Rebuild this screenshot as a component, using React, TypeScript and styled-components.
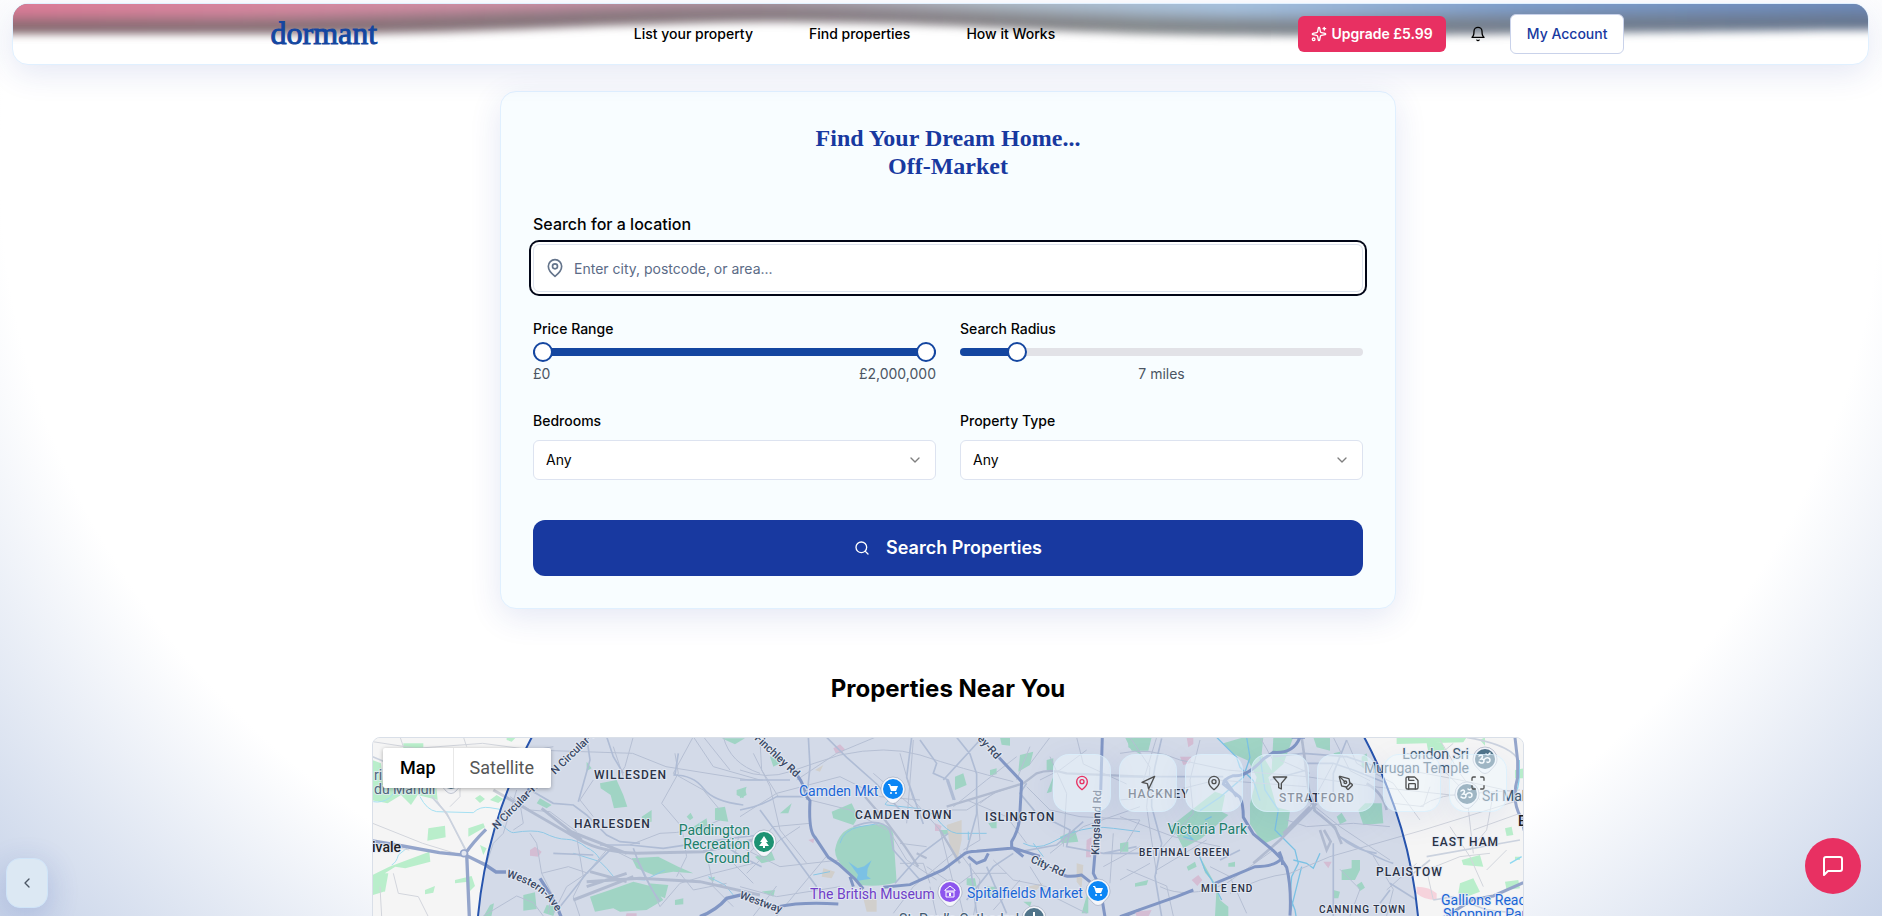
import React, { useState } from 'react';
import styled, { createGlobalStyle, css } from 'styled-components';
import { Sparkles, Navigation, PenTool, Save, Maximize, ChevronLeft, ChevronDown, Search } from 'lucide-react';

const BRAND = '#1446a0';
const INDIGO = '#1839a0';
const PINK = '#e83062';

const GlobalStyle = createGlobalStyle`
  *, *::before, *::after { box-sizing: border-box; }
  html { scrollbar-width: none; }
  body {
    margin: 0;
    font-family: Inter, "Liberation Sans", sans-serif;
    font-size: 14px;
    line-height: 20px;
    color: #020202;
    -webkit-font-smoothing: antialiased;
  }
  button, input, select { font: inherit; color: inherit; }
`;

const Page = styled.div`
  min-height: 100vh;
  overflow: hidden;
  padding: 3px 13px 64px 12px;
  background: radial-gradient(125vw 2060px at 50% 165px, #fff 40%, ${BRAND} 100%);
`;

const glass = css`
  border: 1px solid #e0f0ff;
  box-shadow: 0 8px 32px rgba(31, 60, 165, 0.12);
`;

/* Header */

const Header = styled.header`
  ${glass}
  position: relative;
  height: 62px;
  border-radius: 16px;
  background: #fff;
  display: flex;
  justify-content: center;
  padding-left: 14px;
`;

const WaveClip = styled.div`
  position: absolute;
  inset: 0;
  overflow: hidden;
  border-radius: 15px;
  svg { display: block; width: 100%; height: 100%; }
`;

const HeaderInner = styled.div`
  position: relative;
  flex: 1;
  max-width: 1354px;
  display: flex;
  align-items: center;
  justify-content: space-between;
`;

const Logo = styled.a`
  width: 120px;
  font: 400 32px/40px "Liberation Serif", serif;
  color: ${BRAND};
  -webkit-text-stroke: 1px ${BRAND};
  text-decoration: none;
  padding-bottom: 2px;
`;

const Nav = styled.nav`
  display: flex;
  gap: 56px;
`;

const NavLink = styled.a`
  font-weight: 500;
  color: #000;
  text-decoration: none;
`;

const Actions = styled.div`
  display: flex;
  align-items: center;
  gap: 12px;
`;

const UpgradeButton = styled.button`
  display: flex;
  align-items: center;
  gap: 4px;
  height: 36px;
  padding: 0 13px;
  border: 0;
  border-radius: 6px;
  background: ${PINK};
  color: #fff;
  font-weight: 600;
`;

const IconButton = styled.button`
  display: grid;
  place-items: center;
  width: 40px;
  height: 40px;
  border: 0;
  padding: 0;
  background: transparent;
`;

const AccountButton = styled.button`
  height: 40px;
  padding: 0 16px;
  border: 1px solid #c9d2ea;
  border-radius: 6px;
  background: #fff;
  color: ${INDIGO};
  font-weight: 500;
`;

/* Search card */

const Main = styled.main`
  padding: 26px 0 0 15px;
  display: flex;
  flex-direction: column;
  align-items: center;
`;

const Card = styled.form`
  ${glass}
  width: 100%;
  max-width: 896px;
  padding: 32px;
  border-radius: 16px;
  background: #f8fdff;
`;

const Title = styled.h1`
  margin: 0 0 32px;
  text-align: center;
  font: 700 24px/28px "Liberation Serif", serif;
  color: ${INDIGO};
`;

const Label = styled.label<{ $large?: boolean; $gap: number }>`
  display: block;
  margin-bottom: ${(p) => p.$gap}px;
  font-weight: 500;
  font-size: ${(p) => (p.$large ? 16 : 14)}px;
  line-height: ${(p) => (p.$large ? 24 : 20)}px;
`;

const LocationField = styled.div`
  display: flex;
  align-items: center;
  gap: 9px;
  height: 48px;
  padding: 0 12px 0 11px;
  border: 1px solid #dde3ee;
  border-radius: 6px;
  background: #fff;
  color: #64748b;
  box-shadow: 0 0 0 2px #fff, 0 0 0 4px #020617;
`;

const LocationInput = styled.input`
  flex: 1;
  min-width: 0;
  padding: 2px 0 0;
  border: 0;
  outline: 0;
  background: transparent;
  &::placeholder { color: #5b6b86; opacity: 1; }
`;

const Columns = styled.div`
  display: grid;
  grid-template-columns: 1fr 1fr;
  gap: 24px;
  margin-top: 27px;
`;

const Field = styled.div`
  min-width: 0;
`;

const Slider = styled.div`
  position: relative;
  height: 20px;
  display: flex;
  align-items: center;
`;

const Track = styled.div`
  flex: 1;
  height: 8px;
  border-radius: 4px;
  background: #e2e2e7;
  overflow: hidden;
`;

const Fill = styled.div`
  height: 100%;
  background: ${BRAND};
`;

const Range = styled.input`
  position: absolute;
  inset: 0;
  width: 100%;
  height: 20px;
  margin: 0;
  appearance: none;
  background: transparent;
  pointer-events: none;
  &::-webkit-slider-thumb {
    appearance: none;
    pointer-events: auto;
    width: 20px;
    height: 20px;
    border: 2px solid ${BRAND};
    border-radius: 50%;
    background: #fff;
  }
`;

const Values = styled.div<{ $center?: boolean }>`
  display: flex;
  justify-content: ${(p) => (p.$center ? 'center' : 'space-between')};
  margin-top: 2px;
  color: #4b5563;
`;

const SelectBox = styled.div`
  position: relative;
  svg {
    position: absolute;
    right: 13px;
    top: 12px;
    opacity: 0.5;
    pointer-events: none;
  }
`;

const Select = styled.select`
  display: block;
  width: 100%;
  height: 40px;
  padding: 0 12px;
  border: 1px solid #dde3f0;
  border-radius: 6px;
  background: #fff;
  appearance: none;
`;

const SubmitButton = styled.button`
  display: flex;
  align-items: center;
  justify-content: center;
  gap: 16px;
  width: 100%;
  height: 56px;
  margin-top: 40px;
  border: 0;
  border-radius: 12px;
  background: ${INDIGO};
  color: #fff;
  font-size: 18px;
  font-weight: 600;
`;

/* Map */

const SectionTitle = styled.h2`
  margin: 64px 0 32px;
  font-size: 24px;
  line-height: 32px;
  font-weight: 700;
  color: #000;
`;

const MapFrame = styled.section`
  position: relative;
  width: 100%;
  max-width: 1152px;
  height: 448px;
  border: 1px solid #d9dfe8;
  border-radius: 8px;
  overflow: hidden;
  background: #f5f5f5;
`;

const MapCanvas = styled.svg`
  display: block;
  width: 100%;
  height: 100%;
  font-family: Roboto, sans-serif;
  text { paint-order: stroke; stroke: #e6ebf5; stroke-width: 2px; stroke-opacity: 0.8; }
  .area { font-size: 12px; font-weight: 500; letter-spacing: 1px; fill: #2b3245; }
  .small { font-size: 10px; font-weight: 500; letter-spacing: 1px; fill: #2b3245; }
  .edge { font-size: 14px; font-weight: 500; fill: #202124; }
  .road { font-size: 11px; font-weight: 500; fill: #3a4964; }
  .poi { font-size: 14px; }
`;

const MapTypes = styled.div`
  position: absolute;
  left: 10px;
  top: 10px;
  display: flex;
  border-radius: 2px;
  background: #fff;
  box-shadow: 0 1px 4px rgba(0, 0, 0, 0.3);
`;

const MapTypeButton = styled.button<{ $active?: boolean }>`
  height: 40px;
  padding: 0 17px 0 ${(p) => (p.$active ? 17 : 16)}px;
  border: 0;
  border-left: ${(p) => (p.$active ? '0' : '1px solid #e8e8e8')};
  background: transparent;
  font-family: Roboto, sans-serif;
  font-size: 18px;
  font-weight: ${(p) => (p.$active ? 500 : 400)};
  color: ${(p) => (p.$active ? '#000' : '#565656')};
`;

const MapTools = styled.div`
  position: absolute;
  right: 16px;
  top: 16px;
  display: flex;
  gap: 8px;
`;

const ToolButton = styled.button<{ $active?: boolean }>`
  display: grid;
  place-items: center;
  width: 58px;
  height: 58px;
  padding: 0;
  border: 1px solid rgba(215, 238, 252, 0.7);
  border-radius: 16px;
  background: rgba(238, 248, 253, 0.5);
  box-shadow: 0 8px 32px rgba(31, 60, 165, 0.08);
  color: ${(p) => (p.$active ? PINK : '#4f5050')};
`;

/* Floating controls */

const CollapseButton = styled.button`
  position: fixed;
  left: 6px;
  bottom: 8px;
  display: grid;
  place-items: center;
  width: 42px;
  height: 50px;
  padding: 0;
  border: 1px solid #cfe4f8;
  border-radius: 14px;
  background: #dce8f3;
  box-shadow: 0 8px 32px rgba(31, 60, 165, 0.2);
  color: #4b5563;
`;

const ChatButton = styled.button`
  position: fixed;
  right: 21px;
  bottom: 22px;
  display: grid;
  place-items: center;
  width: 56px;
  height: 56px;
  padding: 0;
  border: 0;
  border-radius: 50%;
  background: ${PINK};
  color: #fff;
`;

function Glyph({ size = 16, children }: { size?: number; children: React.ReactNode }) {
  return (
    <svg
      width={size}
      height={size}
      viewBox="0 0 24 24"
      fill="none"
      stroke="currentColor"
      strokeWidth="2"
      strokeLinecap="round"
      strokeLinejoin="round"
      aria-hidden="true"
    >
      {children}
    </svg>
  );
}

const PinIcon = ({ size = 16 }: { size?: number }) => (
  <Glyph size={size}>
    <path d="M20 10c0 6-8 12-8 12s-8-6-8-12a8 8 0 0 1 16 0Z" />
    <circle cx="12" cy="10" r="3" />
  </Glyph>
);

function HeaderWave() {
  return (
    <WaveClip aria-hidden="true">
      <svg viewBox="0 0 1855 60" preserveAspectRatio="none">
        <defs>
          <linearGradient id="tint" x1="0" x2="1">
            <stop offset="0" stopColor="#db7a95" />
            <stop offset="0.3" stopColor="#cf92a8" />
            <stop offset="0.42" stopColor="#b2a0ae" />
            <stop offset="0.52" stopColor="#b0bcc8" />
            <stop offset="0.65" stopColor="#a5c0dd" />
            <stop offset="0.8" stopColor="#7d9dcc" />
            <stop offset="1" stopColor="#6a87b8" />
          </linearGradient>
          <linearGradient id="shade" x1="0" x2="1">
            <stop offset="0" stopColor="#84696f" />
            <stop offset="0.4" stopColor="#86797f" />
            <stop offset="0.6" stopColor="#84888b" />
            <stop offset="1" stopColor="#65758f" />
          </linearGradient>
          <filter id="soft" x="-5%" width="110%" y="-100%" height="300%">
            <feGaussianBlur stdDeviation="4" />
          </filter>
          <filter id="softer" x="-5%" width="110%" y="-100%" height="300%">
            <feGaussianBlur stdDeviation="7" />
          </filter>
        </defs>
        <path
          d="M-40-40H1900V26C1800 26 1700 28 1560 29C1400 31 1330 33 1190 31C1030 29 940 18 750 18C560 20 500 29 320 30C180 30 60 30-40 30Z"
          fill="url(#shade)"
          filter="url(#soft)"
        />
        <path
          d="M-40-60H1900V9C1700 10 1500 10 1330 14C1150 16 940 3 750 2C560 2 420 13 200 15H-40Z"
          fill="url(#tint)"
          filter="url(#softer)"
        />
      </svg>
    </WaveClip>
  );
}

function MapPin({ x, y, color, children }: { x: number; y: number; color: string; children?: React.ReactNode }) {
  return (
    <g transform={`translate(${x} ${y})`}>
      <path d="M-12 0a12 12 0 1 1 24 0c0 6-4 8-7 12q-5 5-10 0c-3-4-7-6-7-12Z" fill="#f4f6fb" stroke="#8b96ab" strokeOpacity="0.5" />
      <circle r="10" fill={color} />
      {children}
    </g>
  );
}

const Cart = () => (
  <g fill="#fff">
    <path d="M-5-5h2l1 2h7l-2 5h-5l-2-6h-1Z" />
    <circle cx="-2" cy="4" r="1" />
    <circle cx="3" cy="4" r="1" />
  </g>
);

const Om = () => (
  <g fill="none" stroke="#fff" strokeWidth="1.5" strokeLinecap="round">
    <path d="M-6-3c3-2 5 0 2 3 4-1 4 5 0 4l-2-1M-1 1c2-4 6-2 6 0s-2 3-3 2M1-5q2 2 4-1" />
  </g>
);

function LondonMap() {
  return (
    <MapCanvas viewBox="0 0 1150 446" preserveAspectRatio="xMidYMin slice" role="img" aria-label="Map of London">
      <rect width="1150" height="446" fill="#f5f5f5" />

      {/* west */}
      <g transform="translate(-13 -18) scale(0.3333)">
        <g fill="#b9eecb">
          <path d="M38 120l25 10 5 60 45 10 25-30 60 30 30-10 5 50-60-15-20 30-30-30-40 25-50-10ZM130 70h60v14h-60ZM205 325l50-8 2 35-55 10ZM325 325l45-15 5 12-50 28ZM345 235l15-10 15 12-15 12ZM390 240l20-15 20 12-15 12ZM38 465l50-25 120-45 3 30-75 20-30-5-40 25 5 50-33 10ZM285 480l50-12 10 30-15 15-5-28-40 5ZM195 510l30-12-5 20-25 5ZM55 460h30l-10 55-20-5ZM440 40l35 5-20 20-15-5Z" />
          <path d="M680 125l15 20-15 8ZM720 190l50-10 20 45 12 35-40 5-10-40-30-20ZM540 235l35 20-15 10-30-15ZM845 290l30-20v35l-25 5ZM980 290l12-12 8 15-10 8ZM1065 265l30-5 10 45-40-5ZM1130 210l30-10-10 35-20-10ZM1000 320l40-25 5 45-30-5ZM815 415l80-5 60 30 45 20-60-5-60 10-50-20ZM690 530l60-20 70-25 60 15 30 40-50 30-80 5-20-10-55 10ZM865 490l60 5-10 40-45-20ZM490 525l35-8 5 50-40 5ZM370 590l20-35 12-5-8 40ZM360 375l20 10-10 20ZM945 540l25-5v18l-25 2ZM1045 475l20-5-5 15ZM560 555l30 5-10 28-30-10ZM1085 55h70l-30 18Z" />
        </g>
        <g fill="#f6d3dc">
          <path d="M510 390l15-10 20 15-10 15-25-3ZM800 580h30v15h-35Z" />
        </g>
        <g fill="none" stroke="#a5e0f2" strokeWidth="3">
          <path d="M40 245q25 5 50-12l20-25M180 230q20 40 50 45l110 3q20-20 50-15l30 5q-10 30 10 50t30 20q60-10 90 0 40 20 70 20t60 25q25 10 40 35M640 400l80 25 20 20 25 30 90 5 60-30M95 435q15-8 20-30l25-20M1045 470l50 25 25 30" />
        </g>
        <g fill="none" stroke="#d2d5dc" strokeWidth="3">
          <path d="M38 65l130 20 200-15 150 20 300 10 100 40 250 40h40M38 310l150 60 130 40M38 370l110 20M230 240l40 60 50 100M270 260l30-30V200M100 460l15 60 60 10 30 60M60 500l5 90M120 50l10 30M310 50l10 30M320 410l60 20 20-60 30-30 40-130M370 588l100-60 50 20 30 40M510 340l20 30 15 90 30 60-10 60M545 460l80-20 60 20M700 180l-40 60 40 50M760 80l30 90M820 50l-25 90-20 30M905 250l50-90-10-60M905 250l60 70 15 90-30 60M1000 50l-60 110 90 50 50 60M1080 300q-80 40-180 40l-90 35M720 370l120 60 60 130M740 390l-60 70-60 40-40 80M650 350l20 120-30 60 20 60M1000 50l60 90 140 40M1090 50q20 80 110 110M1030 50l80 100M900 560l60-70 100-30 120-30M960 460l40 50 100-20M1040 400l20 100 60 60M420 140l50-40 110-20M450 230l60 40 60 5 80 60M480 250l10 60-30 20M1140 330l-20 100 60 60" />
        </g>
        <g fill="none" stroke="#cbd2de" strokeWidth="5">
          <path d="M38 110l70 30M215 230l45 50 60 115M520 215l60 35 60 5 40 30 60 60 40 20 60 5M680 50l10 70-35 125M740 50l20 60 30 50M940 165q60 0 90 40t120 50M720 375l90 0 100 10 200-30 90-10M600 560l80-100 80-80M820 385q30 90 80 160M1085 370l60 40 60 30M580 400l120 5M955 100l-10 65" />
        </g>
        <g fill="none" stroke="#cdd1d9" strokeWidth="9">
          <path d="M400 210q140 80 260 150 60 35 170 40l200-5 170-40M545 265l120 95M620 330l180 70M680 485l160-10 180 10 180 40M690 455l110 30M680 500l120-40M640 540l180-70" />
        </g>
        <g fill="none" stroke="#94a5cb" strokeWidth="10">
          <path d="M38 363l90 15 110 20 80 8 60 30 30 20h30M540 475l45 70 18 45M320 400l8 190M318 398q20-30 60-70M1020 590q50-20 80-55l50-12M495 235l20-45" />
        </g>
        <circle cx="312" cy="400" r="10" fill="#e3e7f0" stroke="#94a5cb" strokeWidth="5" />
      </g>

      {/* centre */}
      <g transform="translate(367 -18) scale(0.3333)">
        <g fill="#b9eecb">
          <path d="M275 275l60-25 20 40-15 25-60-20ZM285 390q10-60 60-70l80-8q30 5 35 30l10 145q-50 15-110 8-30-20-45-50-30-25-30-55ZM90 110l25-5 5 25-20 10ZM120 280l35-30-10 30ZM0 210l15-5 5 20-20 10ZM645 170l25-10 10 35-35 15ZM750 150l20-5v18l-20 3ZM840 105l40-10-10 40-35 20ZM920 120l20-5v35h-20ZM780 52h30v25l-25-3ZM745 310l25-5v20h-15ZM960 350l45-20 10 35-50 5ZM680 475h25l5 25-30-5ZM740 500h30v30h-30ZM45 410l50-15 10 25-40 10ZM65 515l40-5-5 20ZM1045 510v70h-20ZM1165 52h35v50l-35-20ZM600 330h25l5 12-25 3ZM910 420h-20l5 20ZM920 220l20-50-5 45ZM850 545h25l-5 15Z" />
        </g>
        <g fill="#f3e8d4">
          <path d="M620 315l45-15v60l-15 70-20-50ZM250 445l35 10-10 20-30-5ZM225 150l25-15-10 20ZM370 535h40v40h-30ZM860 500l50-10-20 20ZM1010 430l20 5-5 70-15-20Z" />
        </g>
        <g fill="#f6d3dc">
          <path d="M280 85l20-12 15 15-10 12h-18ZM585 310l20 8-5 15h-15ZM1040 360l15-8-2 60h-15ZM205 360l18-5-3 15Z" />
        </g>
        <g fill="none" stroke="#9cddf1" strokeWidth="3">
          <path d="M465 225q-40 30-25 30l90 10q50 10 60 30 30 40 60 45h90M850 370q40 20 80 0l60-30q70-25 130-15l80 10M685 335v25M300 370q10-40 60-50l60-10M220 465l50-10M880 370l30 40" />
        </g>
        <path d="M325 425l28 20 20-6 22-18-12 25-2 22 12 8-25 4-20 4 6-20Z" fill="#8ed8f0" />
        <g fill="none" stroke="#d2d5dc" strokeWidth="3">
          <path d="M0 150q80 30 150 5t150-50q140-30 240 0 120 40 280 80M0 290l110-70 190-50 120 60 120 10M40 100l50 100 30 130 80 100M60 60l5 90 50 80M170 180l120-80 120-50M210 240l120 30 110 60M0 380l120 60 180-20M20 460l100-100 60-40M0 500l110 30 190-30M40 588l70-90M110 588l150-180M480 100l40 140 80 90 40 160M400 160l140 120M440 320l60 100 90 60M520 60l-20 250M560 440l90 60 20 80M600 330l40 70-120 100-60 80M700 590l20-110-60-80M540 270l140 0 100-60M640 260l100-80 90-70M710 250l10 110-50 30M720 250l40-30 90-30M760 420l60 60 100 20M840 480l-80 90M860 370l-60-80-120-50M870 80l-40 100M930 110l50 110-10 160M860 200l70 70 90 20 180 10M1010 52l20 80 130 60M870 440l50 80 120 60M930 400l100-80 170-60M1090 440l110-60M1120 340l-10 150M480 370l80 10M480 430h70l20 60M570 500l20 90M620 520l80-60 100 0M1040 90l-80 60-60 30M930 52l-60 80M0 430l100-110 110-10" />
        </g>
        <g fill="none" stroke="#cbd2de" strokeWidth="5">
          <path d="M515 52l-15 120 50 140M540 60l50 70-10 30 45 20 20 60M200 240l10-100-5-90M260 52l60 60 90 80 90 100M650 52l40 50 20 60v120l-30 110M0 180h150M0 270q60-10 110-40h80M720 60l-110 120M620 180l20 60M340 320q80-30 110 10l10 60 80 90M860 190l-20 30 50 60 100 50-10 50 110 20 100-20M60 270l170 230M465 490l80-90 80-60M1090 400h110M740 440l60 140M820 400l-60 40-80 100M690 430l20 150M840 395l110-20 80-70" />
        </g>
        <g fill="none" stroke="#cdd1d9" strokeWidth="7">
          <path d="M375 230l60 70 60 80 40 60M620 260l230-70 40-30q40-15 90 0l230 10M530 400l30 15M600 330l60 100" />
        </g>
        <g fill="none" stroke="#94a5cb" strokeWidth="9">
          <path d="M150 140q40 40 50 90l10 12q-5 90 15 110l40 60 30 20 50 45 25 30M330 470l10 30M430 502l80-8 100-45 60-45q10-10 40-10l110-10 80 25M765 100l80 85-5 90q0 50-25 90v20M685 410l25 20 25-10 10-20M965 460q10 15 60 5l50 40M1087 52l-5 170M1065 400l-5 60 20 40 15 90M115 560q70-15 180-8M820 385l30 25M1150 590l50-20" />
        </g>
      </g>

      {/* east */}
      <g transform="translate(747 -18) scale(0.3333)">
        <g fill="#b9eecb">
          <path d="M15 52h80l-10 40-50 0ZM310 70l60-18h60l-5 50 30 50 5-100h60l-30 80-45 40 25 90 40 10-10 70-70 30-40-60v-60l20-80-25-50-45-20ZM145 325l140-110 30 10-10 50 20 10-80 70-55 30-20-40ZM200 440l25-15 5 15-25 12ZM240 410l50 90 10 40 25 20v28h-40l5-90-35-40ZM715 270l20-20h50l5 60-60 5ZM650 290l15-12 15 25-20 10ZM665 450l30-5v-25h25v30l-15 30h-40ZM640 510l20 5-5 20h-15ZM710 495l15-10 10 18-15 10ZM830 52h210l-10 15-200 5ZM920 70l45-5 10 25-50 5ZM1080 60l15-8v25ZM1025 420l55-15 10 35-60-5ZM1020 490l40-15 20 40-40 15-25-10ZM1155 485l40-5 5 25-40 5ZM1155 325l20-5 5 25-20 3ZM1185 150l25-5v30h-25ZM580 52h50v40l-40-10ZM640 100l20-5v20ZM0 370l25-5v30H0ZM325 430l20-5v15h-20ZM45 490l40-10-5 15-35 5ZM1185 410h15v10h-15ZM725 110l15-10 10 60-25-20Z" />
        </g>
        <g fill="#f6d3dc">
          <path d="M180 110l35 0-5 20-20 5ZM215 480l20-15 12 15-15 18ZM890 500q40 0 60 20v20q-40 0-60-20ZM45 575l50-5-10 20H50ZM610 425h25l-10 20ZM200 52h20v20l-15 10Z" />
        </g>
        <g fill="none" stroke="#8ed8f0" strokeWidth="4">
          <path d="M290 52l60 60 10 30 40 40 20 60M380 52l10 60-20 60-70 60-60 40M420 110l15 100 40 60-10 60 60 60 10 40-20 40-5 60 15 40 10 60M520 420l40 10 20 15 20-45M545 440l-20 80-15 60M235 400l20 50 20 30 30 60M200 340l20 20-30-10M255 300l20-10M1178 240q20-30 20-80v-40M1170 430l35-20" />
        </g>
        <g fill="none" stroke="#d2d5dc" strokeWidth="3">
          <path d="M0 100q90-20 180 20l140 30 240 20 200 30 280 30M0 240l90-10 200-50 270 20M30 52l60 90-10 120 30 200M60 300L0 400M90 430L0 480M110 52l-40 130M240 60l-30 120 10 100-100 110M0 290l160 60 140 30M110 450l150-90M160 588l-20-90-120-50M120 500q80 40 200-10l140-100M330 520q90-50 180-60l120-50 280-80 290-90M270 440l60 30 50 110M500 300l60 20 140-10 110 10M640 130l-70 130M680 60l30 70 110 60 80 110M640 52l50 100 60 30M560 240l100 80 150 100M800 588l20-80-60-100M690 588l30-80-60-60M800 510l90-80M940 540l-20-90 100-40 90-10M990 320l60 90 40 90M1060 400l-20-180-80-80M1060 330l140-50M1120 220l-20 110-50 60M900 260q60-40 160-40l140-10M860 150l160 30 180 40M960 60l60 100 60 80M860 100l80 20 60-50M820 250l90 10 20-60M1100 450l60-60M480 120l90 40M420 52l40 70" />
        </g>
        <g fill="none" stroke="#cbd2de" strokeWidth="5">
          <path d="M95 200l10-60 20-85M95 200v60l30 110-20 100 20 120M0 170h130l180 0M460 110l90-10 130 10 120 40M640 370v220M580 270q60 40 80 80 120 70 160 80M660 350q40 40 110 50M560 130l80 0 60 20 100 40M680 60l-40 100 0 60M780 550l30-40M810 490l80 50M920 410l280-50M880 460l50-40M940 540l60-10 100 40 100 10M450 180l110-30M1040 52q120 20 150 60M360 390l-60 30" />
        </g>
        <g fill="none" stroke="#cdd1d9" strokeWidth="8">
          <path d="M545 52l10 70 10 80 20 70 60 50 20 50M590 250l-110 110-80 70M570 260l-80 80M740 190q50 30 60 80M600 330l20 60 12-25-20-35" />
        </g>
        <g fill="none" stroke="#94a5cb" strokeWidth="9">
          <path d="M540 52q-20 50-80 45l-30 20q-50 55-90 50-30 10-30 25l50 40q10 20 10 60l30 50 60 50 20 20 20 30q15 60 10 145M0 590l170-60 50-20M285 490l120-50q60 0 80-25M478 395q10 20 10 40M350 230l-35-50M1185 52l8 70v50q-20 70 10 120l10 40M980 588l80-50 60-10 90-40M515 52l40 0" />
        </g>
      </g>

      <circle cx="575" cy="222" r="472" fill={BRAND} fillOpacity="0.15" stroke="#2754ad" strokeWidth="2" />

      <g>
        <text className="area" x="221" y="41">WILLESDEN</text>
        <text className="area" x="201" y="90">HARLESDEN</text>
        <text className="area" x="482" y="81">CAMDEN TOWN</text>
        <text className="area" x="612" y="83">ISLINGTON</text>
        <text className="area" x="755" y="60">HACKNEY</text>
        <text className="area" x="906" y="64">STRATFORD</text>
        <text className="small" x="766" y="118">BETHNAL GREEN</text>
        <text className="small" x="828" y="154">MILE END</text>
        <text className="small" x="946" y="175">CANNING TOWN</text>
        <text className="area" x="1059" y="108">EAST HAM</text>
        <text className="area" x="1003" y="138">PLAISTOW</text>
        <text className="edge" x="1145" y="88">E</text>
        <text className="edge" x="-1" y="114">ivale</text>
      </g>

      <g>
        <text className="road" transform="translate(182 37) rotate(-44)">N Circular-R</text>
        <text className="road" transform="translate(124 92) rotate(-46)">N Circular-Rd</text>
        <path id="western" d="M133 139Q170 148 184 176" fill="none" />
        <text className="road"><textPath href="#western">Western-Ave</textPath></text>
        <text className="road" transform="translate(381 1) rotate(43)">Finchley Rd</text>
        <text className="road" transform="translate(604 1) rotate(48)">ey-Rd</text>
        <text className="road" transform="translate(657 124) rotate(24)">City-Rd</text>
        <text className="road" transform="translate(726 117) rotate(-88)">Kingsland Rd</text>
        <text className="road" transform="translate(366 160) rotate(20)">Westway</text>
      </g>

      <MapPin x={78} y={41} color="#50748a" />
      <MapPin x={391} y={104} color="#1d9272"><path d="M0-6l4 6H2l3 4H1v2h-2V4h-4l3-4h-2Z" fill="#fff" /></MapPin>
      <MapPin x={520} y={51} color="#0b86f5"><Cart /></MapPin>
      <MapPin x={725} y={153} color="#0b86f5"><Cart /></MapPin>
      <MapPin x={577} y={154} color="#8d56ee">
        <path d="M-5-2l5-4 5 4v1H-5ZM-4 0h8v5h-8Z" fill="none" stroke="#fff" strokeWidth="1" />
        <path d="M-1 1h2v3h-2Z" fill="#fff" />
      </MapPin>
      <MapPin x={661} y={180} color="#50748a"><path d="M-1-6h2v4h3v2H1v6h-2V0h-3v-2h3Z" fill="#fff" /></MapPin>
      <MapPin x={1112} y={21} color="#50748a"><Om /></MapPin>
      <MapPin x={1094} y={56} color="#50748a"><Om /></MapPin>

      <g className="poi">
        <text x="1" y="42" fill="#50687c">ri</text>
        <text x="1" y="56" fill="#50687c">du Mandir</text>
        <g fill="#20806a" textAnchor="end">
          <text x="377" y="97">Paddington</text>
          <text x="377" y="111">Recreation</text>
          <text x="377" y="125">Ground</text>
          <text x="874" y="96">Victoria Park</text>
        </g>
        <g fill="#1a66d6">
          <text x="426" y="58">Camden Mkt</text>
          <text x="594" y="160">Spitalfields Market</text>
          <text x="1068" y="167">Gallions Reach</text>
          <text x="1070" y="181">Shopping Park</text>
        </g>
        <text x="437" y="161" fill="#7040c8">The British Museum</text>
        <g fill="#3f5a70">
          <text x="526" y="186">St. Paul’s Cathedral</text>
          <text x="1096" y="21" textAnchor="end">London Sri</text>
          <text x="1096" y="35" textAnchor="end">Murugan Temple</text>
          <text x="1109" y="63">Sri Mahalakshmi</text>
        </g>
      </g>
    </MapCanvas>
  );
}

const tools = [
  { label: 'Show area', icon: <PinIcon />, active: true },
  { label: 'My location', icon: <Navigation size={16} /> },
  { label: 'Drop pin', icon: <PinIcon /> },
  { label: 'Filter', icon: <Glyph><polygon points="22 3 2 3 10 12.46 10 19 14 21 14 12.46 22 3" /></Glyph> },
  { label: 'Draw area', icon: <PenTool size={16} /> },
  { label: 'Save search', icon: <Save size={16} /> },
  { label: 'Full screen', icon: <Maximize size={16} /> },
];

export default function App() {
  const [minPrice, setMinPrice] = useState(0);
  const [maxPrice, setMaxPrice] = useState(2000000);
  const [radius, setRadius] = useState(7);
  const part = (radius - 1) / 49;

  return (
    <>
      <GlobalStyle />
      <Page>
        <Header>
          <HeaderWave />
          <HeaderInner>
            <Logo href="#">dormant</Logo>
            <Nav>
              <NavLink href="#list">List your property</NavLink>
              <NavLink href="#find">Find properties</NavLink>
              <NavLink href="#how">How it Works</NavLink>
            </Nav>
            <Actions>
              <UpgradeButton type="button">
                <Sparkles size={16} />
                Upgrade £5.99
              </UpgradeButton>
              <IconButton type="button" aria-label="Notifications">
                <Glyph>
                  <path d="M6 8a6 6 0 0 1 12 0c0 7 3 9 3 9H3s3-2 3-9" />
                  <path d="M10.3 21a1.94 1.94 0 0 0 3.4 0" />
                </Glyph>
              </IconButton>
              <AccountButton type="button">My Account</AccountButton>
            </Actions>
          </HeaderInner>
        </Header>

        <Main>
          <Card onSubmit={(e) => e.preventDefault()}>
            <Title>
              Find Your Dream Home...
              <br />
              Off-Market
            </Title>

            <Label $large $gap={8} htmlFor="location">Search for a location</Label>
            <LocationField>
              <PinIcon size={20} />
              <LocationInput id="location" placeholder="Enter city, postcode, or area..." />
            </LocationField>

            <Columns>
              <Field>
                <Label $gap={3} htmlFor="min-price">Price Range</Label>
                <Slider>
                  <Track>
                    <Fill style={{ marginLeft: `${minPrice / 20000}%`, width: `${(maxPrice - minPrice) / 20000}%` }} />
                  </Track>
                  <Range id="min-price" type="range" min={0} max={2000000} step={50000} value={minPrice}
                    onChange={(e) => setMinPrice(Math.min(+e.target.value, maxPrice))} />
                  <Range aria-label="Maximum price" type="range" min={0} max={2000000} step={50000} value={maxPrice}
                    onChange={(e) => setMaxPrice(Math.max(+e.target.value, minPrice))} />
                </Slider>
                <Values>
                  <span>£{minPrice.toLocaleString('en-GB')}</span>
                  <span>£{maxPrice.toLocaleString('en-GB')}</span>
                </Values>
              </Field>
              <Field>
                <Label $gap={3} htmlFor="radius">Search Radius</Label>
                <Slider>
                  <Track>
                    <Fill style={{ width: `${part * 100}%` }} />
                  </Track>
                  <Range id="radius" type="range" min={1} max={50} value={radius}
                    onChange={(e) => setRadius(+e.target.value)} />
                </Slider>
                <Values $center>{radius} miles</Values>
              </Field>
            </Columns>

            <Columns>
              <Field>
                <Label $gap={9} htmlFor="bedrooms">Bedrooms</Label>
                <SelectBox>
                  <Select id="bedrooms">
                    <option>Any</option>
                  </Select>
                  <ChevronDown size={16} />
                </SelectBox>
              </Field>
              <Field>
                <Label $gap={9} htmlFor="type">Property Type</Label>
                <SelectBox>
                  <Select id="type">
                    <option>Any</option>
                  </Select>
                  <ChevronDown size={16} />
                </SelectBox>
              </Field>
            </Columns>

            <SubmitButton type="submit">
              <Search size={16} />
              Search Properties
            </SubmitButton>
          </Card>

          <SectionTitle>Properties Near You</SectionTitle>

          <MapFrame>
            <LondonMap />
            <MapTypes>
              <MapTypeButton type="button" $active>Map</MapTypeButton>
              <MapTypeButton type="button">Satellite</MapTypeButton>
            </MapTypes>
            <MapTools>
              {tools.map((t) => (
                <ToolButton key={t.label} type="button" aria-label={t.label} $active={t.active}>
                  {t.icon}
                </ToolButton>
              ))}
            </MapTools>
          </MapFrame>
        </Main>
      </Page>

      <CollapseButton type="button" aria-label="Collapse panel">
        <ChevronLeft size={16} />
      </CollapseButton>
      <ChatButton type="button" aria-label="Open chat">
        <Glyph size={24}>
          <path d="M21 15a2 2 0 0 1-2 2H7l-4 4V5a2 2 0 0 1 2-2h14a2 2 0 0 1 2 2z" />
        </Glyph>
      </ChatButton>
    </>
  );
}
